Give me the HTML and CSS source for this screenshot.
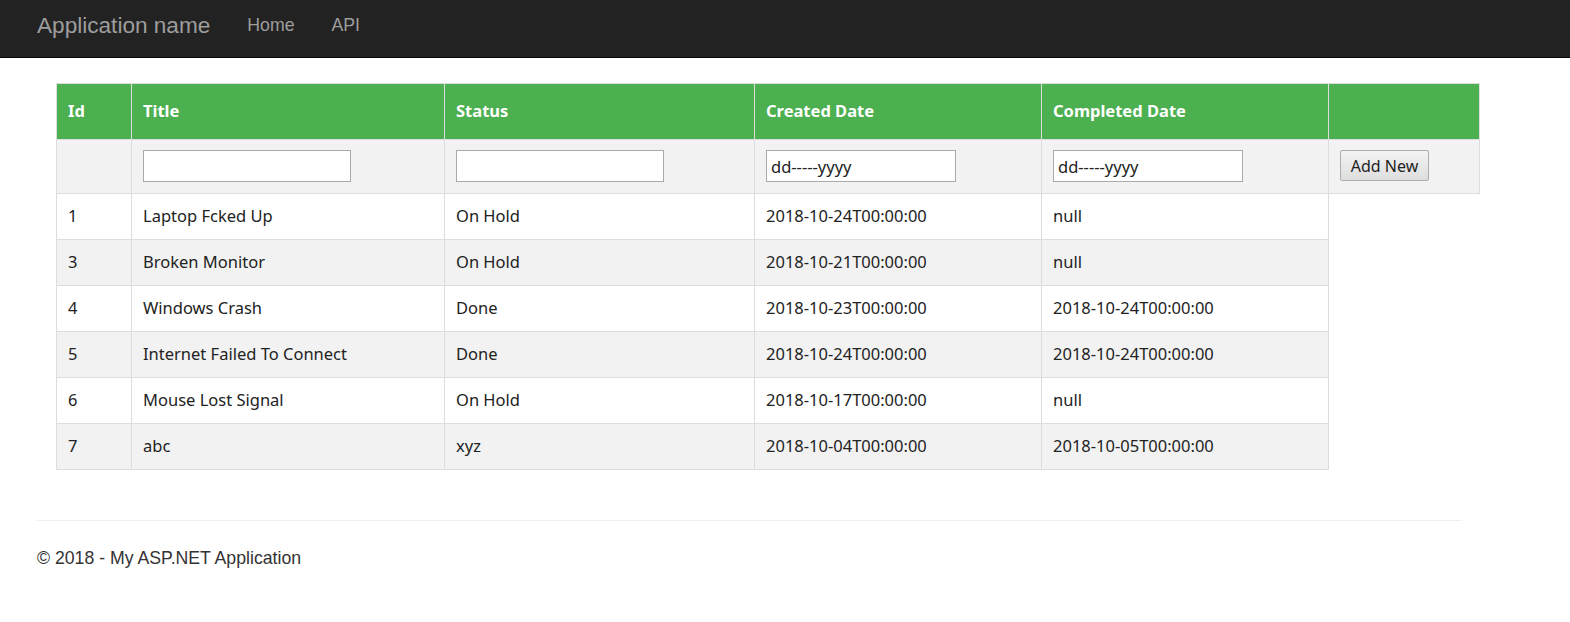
FILE: index.html
```html
<!DOCTYPE html>
<html>
<head>
<meta charset="utf-8">
<link rel="stylesheet" href="styles.css">
</head>
<body>
<div class="navbar">
  <a class="brand">Application name</a>
  <a class="nav-link">Home</a>
  <a class="nav-link">API</a>
</div>
<div class="container">
  <table class="grid">
    <colgroup>
      <col class="c-id">
      <col class="c-title">
      <col class="c-status">
      <col class="c-created">
      <col class="c-completed">
      <col class="c-action">
    </colgroup>
    <tr class="head">
      <th>Id</th>
      <th>Title</th>
      <th>Status</th>
      <th>Created Date</th>
      <th>Completed Date</th>
      <th></th>
    </tr>
    <tr class="filter">
      <td></td>
      <td><input class="field wide" type="text"></td>
      <td><input class="field wide" type="text"></td>
      <td><input class="field date" type="text" value="dd-----yyyy"></td>
      <td><input class="field date" type="text" value="dd-----yyyy"></td>
      <td><button class="btn">Add New</button></td>
    </tr>
    <tr><td>1</td><td>Laptop Fcked Up</td><td>On Hold</td><td>2018-10-24T00:00:00</td><td>null</td></tr>
    <tr><td>3</td><td>Broken Monitor</td><td>On Hold</td><td>2018-10-21T00:00:00</td><td>null</td></tr>
    <tr><td>4</td><td>Windows Crash</td><td>Done</td><td>2018-10-23T00:00:00</td><td>2018-10-24T00:00:00</td></tr>
    <tr><td>5</td><td>Internet Failed To Connect</td><td>Done</td><td>2018-10-24T00:00:00</td><td>2018-10-24T00:00:00</td></tr>
    <tr><td>6</td><td>Mouse Lost Signal</td><td>On Hold</td><td>2018-10-17T00:00:00</td><td>null</td></tr>
    <tr><td>7</td><td>abc</td><td>xyz</td><td>2018-10-04T00:00:00</td><td>2018-10-05T00:00:00</td></tr>
  </table>
  <hr class="rule">
  <footer class="footer">© 2018 - My ASP.NET Application</footer>
</div>
</body>
</html>
```
FILE: styles.css
```css
html, body {
  margin: 0;
  padding: 0;
  background: #fff;
}
body {
  font-family: "Liberation Sans", Arial, sans-serif;
  color: #333;
}
.navbar {
  height: 58px;
  background: #222;
  border-bottom: 1px solid #080808;
  display: flex;
  align-items: center;
  padding-left: 37px;
  box-sizing: border-box;
}
.brand {
  color: #9d9d9d;
  font-size: 22.6px;
  margin-right: 37px;
  position: relative;
  top: -3px;
}
.nav-link {
  color: #9d9d9d;
  font-size: 17.7px;
  margin-right: 37px;
  position: relative;
  top: -3px;
}
.container {
  margin-left: 37px;
  width: 1424px;
  padding-top: 25px;
}
.grid {
  margin-left: 19px;
  width: 1423px;
  table-layout: fixed;
  border-collapse: collapse;
  font-family: "Noto Sans", "DejaVu Sans", sans-serif;
  font-size: 16.5px;
  color: #222;
}
.grid th, .grid td {
  border: 1px solid #ddd;
  text-align: left;
  padding: 0 11px;
}
.grid td { padding-bottom: 3px; }
.grid tr { height: 46px; }
.grid tr.head { height: 56px; }
.grid tr.filter { height: 54px; }
.grid tr.filter td { padding-bottom: 0; }
.grid tr:nth-child(even) { background: #f2f2f2; }
.grid th {
  background: #4caf50;
  color: #fff;
  font-weight: bold;
  padding-bottom: 2px;
}
.c-id { width: 75px; }
.c-title { width: 313px; }
.c-status { width: 310px; }
.c-created { width: 287px; }
.c-completed { width: 287px; }
.c-action { width: 151px; }
.field {
  height: 32px;
  box-sizing: border-box;
  border: 1px solid #a9a9a9;
  background: #fff;
  font-family: "Noto Sans", "DejaVu Sans", sans-serif;
  font-size: 16.5px;
  color: #222;
  padding: 0 4px;
  display: block;
  margin-top: -1px;
}
.wide { width: 208px; }
.date { width: 190px; }
.btn {
  height: 31px;
  width: 89px;
  border: 1px solid #adadad;
  border-radius: 2px;
  background: linear-gradient(#f3f3f3, #dedede);
  font-family: "Noto Sans", "DejaVu Sans", sans-serif;
  font-size: 16px;
  color: #222;
  padding: 0;
  margin-top: -2px;
  display: block;
}
.rule {
  margin: 50px 0 0 0;
  border: 0;
  border-top: 1px solid #eee;
}
.footer {
  font-size: 17.7px;
  margin-top: 27px;
  color: #333;
}
```
